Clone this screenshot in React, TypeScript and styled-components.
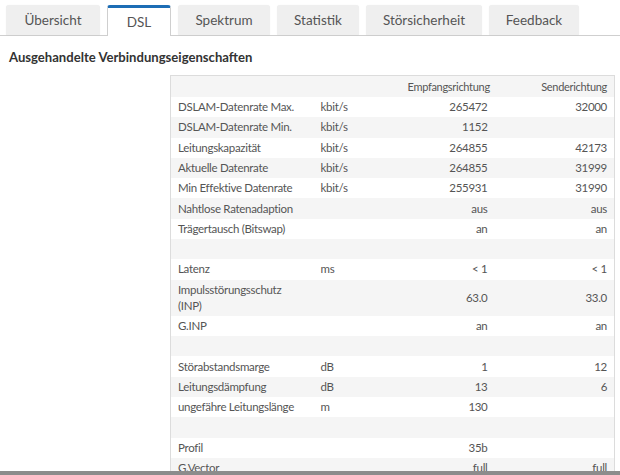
import React from "react";
import styled, { createGlobalStyle } from "styled-components";

const Global = createGlobalStyle`
  html, body { margin: 0; padding: 0; background: #fff; }
  body { font-family: Lato, "Open Sans", sans-serif; color: #4d4d4d; overflow: hidden; }
`;

const Page = styled.div`
  width: 620px;
  height: 475px;
  overflow: hidden;
`;

const TabBar = styled.div`
  display: flex;
  gap: 7px;
  padding: 5px 0 0 6px;
  height: 30px;
  border-bottom: 1px solid #cfcfcf;
`;

const Tab = styled.div<{ $active?: boolean; $w: number }>`
  width: ${(p) => p.$w}px;
  box-sizing: border-box;
  display: flex;
  align-items: center;
  justify-content: center;
  font-size: 13.5px;
  color: #555;
  border-radius: 3px 3px 0 0;
  background: ${(p) => (p.$active ? "#fff" : "#efefef")};
  border-top: ${(p) => (p.$active ? "3px solid #1d6db5" : "none")};
  border-left: ${(p) => (p.$active ? "1px solid #cfcfcf" : "none")};
  border-right: ${(p) => (p.$active ? "1px solid #cfcfcf" : "none")};
  margin-bottom: ${(p) => (p.$active ? "-1px" : "0")};
  padding-bottom: ${(p) => (p.$active ? "1px" : "0")};
  box-shadow: ${(p) => (p.$active ? "none" : "0 0 1px rgba(0,0,0,0.08)")};
`;

const Heading = styled.h2`
  margin: 12px 0 0 9px;
  font-size: 13.1px;
  font-weight: 700;
  color: #333;
  line-height: 18px;
`;

const Section = styled.div`
  padding: 9px 6px 0 170px;
`;

const Table = styled.table`
  width: 444px;
  table-layout: fixed;
  border-collapse: collapse;
  border: 1px solid #dcdcdc;
  font-size: 11.5px;
  letter-spacing: -0.3px;
  color: #555;
`;

const Row = styled.tr<{ $alt?: boolean }>`
  background: ${(p) => (p.$alt ? "#f5f5f5" : "#fff")};
`;

const Cell = styled.td<{ $right?: boolean }>`
  padding: 2.15px 7px;
  line-height: 16px;
  text-align: ${(p) => (p.$right ? "right" : "left")};
  vertical-align: middle;
  height: 16px;
`;

const HeadCell = styled.th<{ $right?: boolean }>`
  padding: 3px 7px 2px 7px;
  line-height: 16px;
  font-weight: 400;
  font-size: 11px;
  text-align: ${(p) => (p.$right ? "right" : "left")};
`;

const BottomBar = styled.div`
  position: fixed;
  left: 0;
  right: 0;
  bottom: 0;
  height: 4px;
  background: #8c8c8c;
`;

const tabs: [string, number][] = [
  ["Übersicht", 94],
  ["DSL", 64],
  ["Spektrum", 92],
  ["Statistik", 82],
  ["Störsicherheit", 116],
  ["Feedback", 90],
];

type R = [string, string, string, string] | null;

const rows: R[] = [
  ["DSLAM-Datenrate Max.", "kbit/s", "265472", "32000"],
  ["DSLAM-Datenrate Min.", "kbit/s", "1152", ""],
  ["Leitungskapazität", "kbit/s", "264855", "42173"],
  ["Aktuelle Datenrate", "kbit/s", "264855", "31999"],
  ["Min Effektive Datenrate", "kbit/s", "255931", "31990"],
  ["Nahtlose Ratenadaption", "", "aus", "aus"],
  ["Trägertausch (Bitswap)", "", "an", "an"],
  null,
  ["Latenz", "ms", "< 1", "< 1"],
  ["Impulsstörungsschutz (INP)", "", "63.0", "33.0"],
  ["G.INP", "", "an", "an"],
  null,
  ["Störabstandsmarge", "dB", "1", "12"],
  ["Leitungsdämpfung", "dB", "13", "6"],
  ["ungefähre Leitungslänge", "m", "130", ""],
  null,
  ["Profil", "", "35b", ""],
  ["G.Vector", "", "full", "full"],
];

export default function App() {
  return (
    <Page>
      <Global />
      <TabBar>
        {tabs.map(([t, w]) => (
          <Tab key={t} $w={w} $active={t === "DSL"}>
            {t}
          </Tab>
        ))}
      </TabBar>
      <Heading>Ausgehandelte Verbindungseigenschaften</Heading>
      <Section>
        <Table>
          <colgroup>
            <col style={{ width: 143 }} />
            <col style={{ width: 87 }} />
            <col style={{ width: 94 }} />
            <col style={{ width: 120 }} />
          </colgroup>
          <thead>
            <Row $alt>
              <HeadCell />
              <HeadCell />
              <HeadCell $right>Empfangsrichtung</HeadCell>
              <HeadCell $right>Senderichtung</HeadCell>
            </Row>
          </thead>
          <tbody>
            {rows.map((r, i) => (
              <Row key={i} $alt={i % 2 === 1}>
                {r ? (
                  <>
                    <Cell>{r[0]}</Cell>
                    <Cell>{r[1]}</Cell>
                    <Cell $right>{r[2]}</Cell>
                    <Cell $right>{r[3]}</Cell>
                  </>
                ) : (
                  <Cell colSpan={4} />
                )}
              </Row>
            ))}
          </tbody>
        </Table>
      </Section>
      <BottomBar />
    </Page>
  );
}
